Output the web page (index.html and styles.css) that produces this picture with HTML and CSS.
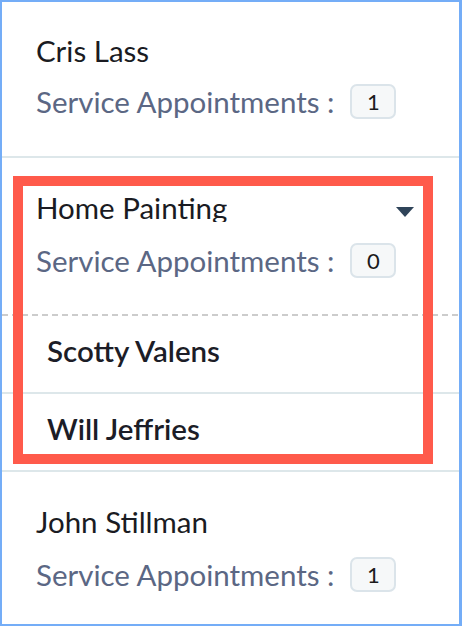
FILE: index.html
```html
<!DOCTYPE html>
<html>
<head>
<meta charset="utf-8">
<link rel="stylesheet" href="styles.css">
</head>
<body>
<div class="list">
  <div class="row row-first">
    <div class="name">Cris Lass</div>
    <div class="meta"><span class="label">Service Appointments :</span><span class="badge">1</span></div>
  </div>
  <div class="group">
    <div class="group-head">
      <div class="head-line">
        <div class="name name-clip">Home Painting</div>
        <svg class="caret" width="18" height="10" viewBox="0 0 18 10"><path d="M0 0 H18 L9 10 Z" fill="#2f4459"/></svg>
      </div>
      <div class="meta meta-group"><span class="label">Service Appointments :</span><span class="badge">0</span></div>
    </div>
    <div class="dash"></div>
    <div class="sub">Scotty Valens</div>
    <div class="sub">Will Jeffries</div>
  </div>
  <div class="row row-last">
    <div class="name">John Stillman</div>
    <div class="meta"><span class="label">Service Appointments :</span><span class="badge">1</span></div>
  </div>
  <div class="highlight"></div>
</div>
</body>
</html>
```

FILE: styles.css
```css
* { box-sizing: border-box; }
html, body { margin: 0; padding: 0; background: #fff; }
body { font-family: Lato, "Open Sans", sans-serif; }

.list {
  position: relative;
  width: 462px;
  height: 626px;
  border: 2px solid #74adf7;
  border-right-width: 3px;
  display: flex;
  flex-direction: column;
  overflow: hidden;
}

.row {
  padding: 33px 0 0 34px;
  border-bottom: 2px solid #dde7ea;
}
.row-first { height: 156px; flex: none; }
.row-last { flex: 1; border-bottom: none; padding-top: 34px; }

.name {
  font-size: 29.5px;
  line-height: 32px;
  color: #1a1b22;
}

.meta {
  display: flex;
  align-items: center;
  margin-top: 17px;
}
.row-last .meta { margin-top: 19px; }

.label {
  font-size: 29.5px;
  line-height: 32px;
  color: #5b6784;
}

.badge {
  margin-left: 16px;
  width: 46px;
  height: 35px;
  border: 2px solid #dbe4ea;
  border-radius: 7px;
  background: #f6f8f9;
  display: flex;
  align-items: center;
  justify-content: center;
  font-size: 22px;
  color: #1b1b1b;
}

.group-head {
  padding: 35px 0 0 34px;
  height: 156px;
}
.head-line {
  display: flex;
  align-items: flex-start;
  justify-content: space-between;
  padding-right: 45px;
}
.name-clip {
  height: 29px;
  line-height: 29px;
  overflow: hidden;
}
.caret { margin-top: 14px; }
.meta-group { margin-top: 21px; }

.dash {
  height: 2px;
  background: repeating-linear-gradient(to right, #cccccc 0 6px, transparent 6px 10px);
}

.sub {
  height: 78px;
  padding: 19px 0 0 45px;
  font-size: 29.5px;
  line-height: 32px;
  font-weight: 600;
  color: #1c1d27;
  border-bottom: 2px solid #dde7ea;
}

.highlight {
  position: absolute;
  left: 11px;
  top: 174px;
  width: 420px;
  height: 288px;
  border: 10px solid #ff5a4b;
  pointer-events: none;
}
```
